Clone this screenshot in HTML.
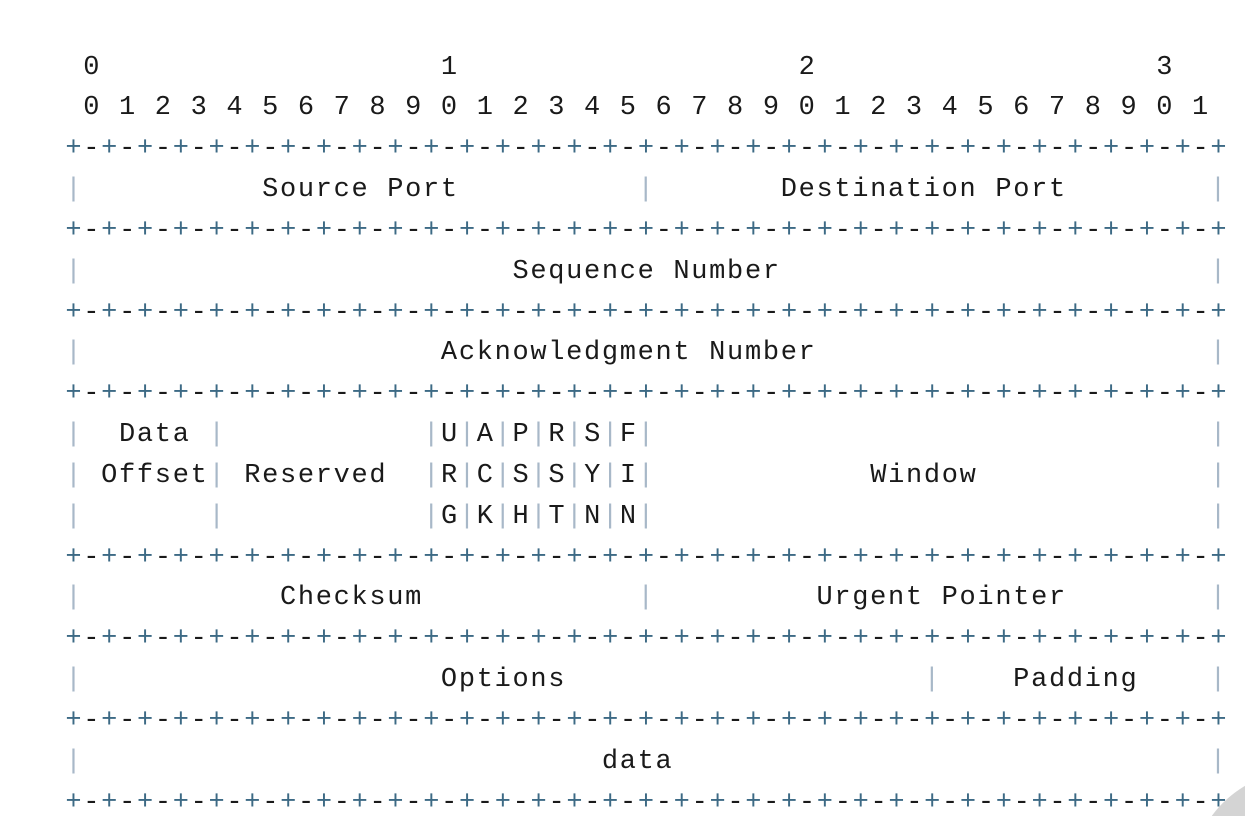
<!DOCTYPE html>
<html><head><meta charset="utf-8"><style>
html,body{margin:0;padding:0;background:#fff;width:1245px;height:816px;overflow:hidden;position:relative}
pre{position:absolute;left:65.4px;top:47.6px;margin:0;font-family:"Liberation Mono",monospace;font-size:27px;letter-spacing:1.68px;line-height:40.83px;color:#1a1a1a;height:768px;overflow:hidden}
.p{color:#3d6a85}.v{color:#a8b8c8}
.c{position:absolute;left:1191px;top:771px;width:218px;height:218px;border-radius:50%;background:#d4d4d4}
</style></head><body>
<pre id="t"> 0                   1                   2                   3
 0 1 2 3 4 5 6 7 8 9 0 1 2 3 4 5 6 7 8 9 0 1 2 3 4 5 6 7 8 9 0 1
+-+-+-+-+-+-+-+-+-+-+-+-+-+-+-+-+-+-+-+-+-+-+-+-+-+-+-+-+-+-+-+-+
|          Source Port          |       Destination Port        |
+-+-+-+-+-+-+-+-+-+-+-+-+-+-+-+-+-+-+-+-+-+-+-+-+-+-+-+-+-+-+-+-+
|                        Sequence Number                        |
+-+-+-+-+-+-+-+-+-+-+-+-+-+-+-+-+-+-+-+-+-+-+-+-+-+-+-+-+-+-+-+-+
|                    Acknowledgment Number                      |
+-+-+-+-+-+-+-+-+-+-+-+-+-+-+-+-+-+-+-+-+-+-+-+-+-+-+-+-+-+-+-+-+
|  Data |           |U|A|P|R|S|F|                               |
| Offset| Reserved  |R|C|S|S|Y|I|            Window             |
|       |           |G|K|H|T|N|N|                               |
+-+-+-+-+-+-+-+-+-+-+-+-+-+-+-+-+-+-+-+-+-+-+-+-+-+-+-+-+-+-+-+-+
|           Checksum            |         Urgent Pointer        |
+-+-+-+-+-+-+-+-+-+-+-+-+-+-+-+-+-+-+-+-+-+-+-+-+-+-+-+-+-+-+-+-+
|                    Options                    |    Padding    |
+-+-+-+-+-+-+-+-+-+-+-+-+-+-+-+-+-+-+-+-+-+-+-+-+-+-+-+-+-+-+-+-+
|                             data                              |
+-+-+-+-+-+-+-+-+-+-+-+-+-+-+-+-+-+-+-+-+-+-+-+-+-+-+-+-+-+-+-+-+</pre>
<div class="c"></div>
<script>
var t=document.getElementById('t');
t.innerHTML=t.innerHTML.replace(/\+/g,'<span class="p">+</span>').replace(/\|/g,'<span class="v">|</span>');
</script>
</body></html>
